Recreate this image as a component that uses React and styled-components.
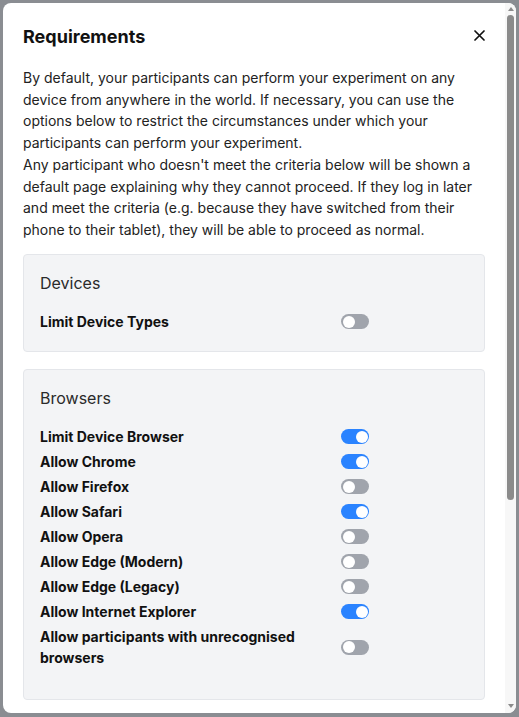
import React from 'react';
import styled, { createGlobalStyle } from 'styled-components';

const GlobalStyle = createGlobalStyle`
    html, body {
        margin: 0;
        padding: 0;
        background: #8a8d92;
        font-family: Inter, "Noto Sans", "Liberation Sans", sans-serif;
        color: #1f1f1f;
    }
    * { box-sizing: border-box; }
`

const devices = [
    { label: 'Limit Device Types', on: false },
]

const browsers = [
    { label: 'Limit Device Browser', on: true },
    { label: 'Allow Chrome', on: true },
    { label: 'Allow Firefox', on: false },
    { label: 'Allow Safari', on: true },
    { label: 'Allow Opera', on: false },
    { label: 'Allow Edge (Modern)', on: false },
    { label: 'Allow Edge (Legacy)', on: false },
    { label: 'Allow Internet Explorer', on: true },
    { label: 'Allow participants with unrecognised browsers', on: false },
]

function CloseIcon() {
    return (
        <svg width="11" height="11" viewBox="0 0 11 11">
            <path d="M1 1 L10 10 M10 1 L1 10" stroke="#111" strokeWidth="1.7" strokeLinecap="round" />
        </svg>
    )
}

function Section({ title, rows, tail }) {
    return (
        <Card $tail={tail}>
            <CardTitle>{title}</CardTitle>
            <Rows>
                {rows.map(r => (
                    <Row key={r.label}>
                        <Label>{r.label}</Label>
                        <Switch $on={r.on} role="switch" aria-checked={r.on} />
                    </Row>
                ))}
            </Rows>
        </Card>
    )
}

export default function App() {
    return (
        <>
            <GlobalStyle />
            <Overlay>
                <Modal>
                    <Content>
                        <Header>
                            <Title>Requirements</Title>
                            <CloseButton aria-label="Close"><CloseIcon /></CloseButton>
                        </Header>
                        <Text>
                            By default, your participants can perform your experiment on any device from anywhere in the world. If necessary, you can use the options below to restrict the circumstances under which your participants can perform your experiment.
                        </Text>
                        <Text>
                            Any participant who doesn't meet the criteria below will be shown a default page explaining why they cannot proceed. If they log in later and meet the criteria (e.g. because they have switched from their phone to their tablet), they will be able to proceed as normal.
                        </Text>
                        <Sections>
                            <Section title="Devices" rows={devices} tail={19} />
                            <Section title="Browsers" rows={browsers} tail={31} />
                        </Sections>
                    </Content>
                    <ScrollTrack>
                        <Arrow $up />
                        <Thumb />
                        <Arrow />
                    </ScrollTrack>
                </Modal>
            </Overlay>
        </>
    )
}

const Overlay = styled.div`
    height: 100vh;
    padding: 3px 3px 4px 3px;
`

const Modal = styled.div`
    display: flex;
    width: 513px;
    height: 710px;
    background: #fff;
    border-radius: 8px;
    overflow: hidden;
`

const Content = styled.div`
    flex: 1;
    min-width: 0;
    padding: 20px;
    overflow: hidden;
`

const ScrollTrack = styled.div`
    width: 11px;
    flex-shrink: 0;
    display: flex;
    flex-direction: column;
    align-items: center;
    justify-content: space-between;
    padding: 4px 0 5px;
    background: #f7f7f7;
`

const Arrow = styled.span`
    width: 0;
    height: 0;
    border-left: 3.5px solid transparent;
    border-right: 3.5px solid transparent;
    ${p => (p.$up ? 'border-bottom' : 'border-top')}: 4px solid #8b8b8b;
`

const Thumb = styled.div`
    width: 7px;
    height: 485px;
    margin-top: 4px;
    margin-bottom: auto;
    border-radius: 4px;
    background: #8b8b8b;
`

const Header = styled.div`
    display: flex;
    justify-content: space-between;
    align-items: center;
    margin-bottom: 16px;
`

const Title = styled.h2`
    margin: 0;
    font-size: 18px;
    line-height: 28px;
    font-weight: 700;
    color: #111;
`

const CloseButton = styled.button`
    display: flex;
    align-items: center;
    justify-content: center;
    border: none;
    background: none;
    padding: 0;
    margin-top: -3px;
    cursor: pointer;
`

const Text = styled.p`
    margin: 0 0 1px;
    font-size: 14px;
    line-height: 21.5px;
    color: #222;
`

const Sections = styled.div`
    display: flex;
    flex-direction: column;
    gap: 17px;
    margin-top: 14px;
`

const Card = styled.div`
    background: #f3f4f6;
    border: 1px solid #e4e6ea;
    border-radius: 4px;
    padding: 16px 16px ${p => p.$tail}px;
`

const CardTitle = styled.div`
    font-size: 16px;
    line-height: 24px;
    color: #2a2a2a;
    margin-bottom: 16px;
`

const Rows = styled.div`
    display: flex;
    flex-direction: column;
    gap: 4px;
`

const Row = styled.div`
    display: grid;
    grid-template-columns: 301px 28px;
    align-items: center;
`

const Label = styled.div`
    font-size: 14px;
    line-height: 21px;
    font-weight: 700;
    color: #111;
    padding-right: 4px;
`

const Switch = styled.span`
    position: relative;
    display: block;
    width: 28px;
    height: 15px;
    border-radius: 8px;
    background: ${p => (p.$on ? '#2a83ff' : '#a0a4ac')};

    &::after {
        content: '';
        position: absolute;
        top: 1.5px;
        left: ${p => (p.$on ? '14.5px' : '1.5px')};
        width: 12px;
        height: 12px;
        border-radius: 50%;
        background: #fff;
    }
`
